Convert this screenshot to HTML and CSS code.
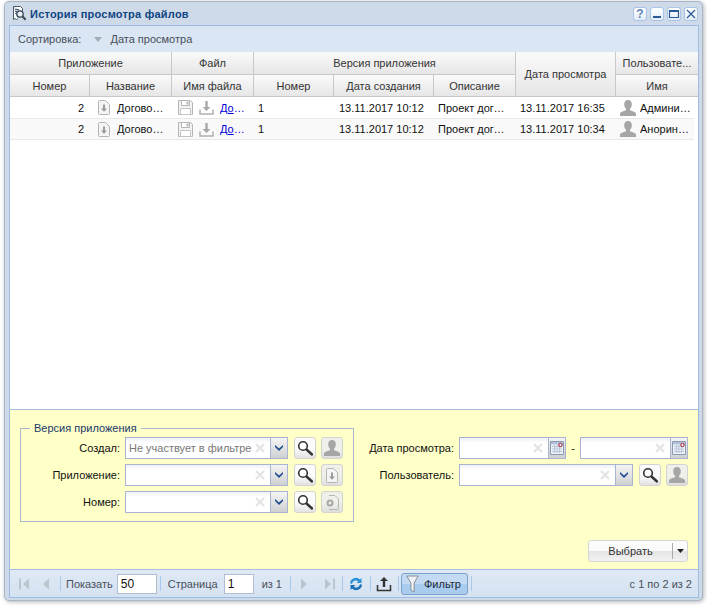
FILE: index.html
```html
<!DOCTYPE html>
<html lang="ru">
<head>
<meta charset="utf-8">
<title>История просмотра файлов</title>
<link rel="stylesheet" href="styles.css">
</head>
<body>
<svg class="defs" width="0" height="0">
  <symbol id="i-doc" viewBox="0 0 12 15"><path d="M1.500.5h6l4 4v9a1 1 0 0 1-1 1h-9a1 1 0 0 1-1-1v-12a1 1 0 0 1 1-1z" fill="#f4f4f4" stroke="#b5b5b5"/><path d="M5 4.500h2v4h2l-3 3.200-3-3.200h2z" fill="#9a9a9a"/></symbol>
  <symbol id="i-save" viewBox="0 0 15 15"><path d="M.5.5h12l2 2v12H.5z" fill="#f2f2f2" stroke="#b5b5b5"/><path d="M3.500.5h8v5h-8z" fill="#fff" stroke="#b5b5b5"/><path d="M8.500 1.500h2v3h-2z" fill="#b5b5b5"/><path d="M2.500 8.500h10v6h-10z" fill="#fff" stroke="#c5c5c5"/></symbol>
  <symbol id="i-down" viewBox="0 0 15 15"><path d="M6.300 1h2.400v6h2.800L7.500 11 3.500 7h2.800z" fill="#a8a8a8"/><path d="M1 9.500v4.500h13V9.500" fill="none" stroke="#b0b0b0" stroke-width="1.500"/></symbol>
  <symbol id="i-user" viewBox="0 0 16 16"><path d="M8 0c2.600 0 3.800 1.800 3.800 4.200 0 2-.8 3.600-1.800 4.500v1.500c2 .8 5.500 1.400 6 3.300V16H0v-2.500c.5-1.900 4-2.500 6-3.300V8.700C5 7.800 4.200 6.200 4.200 4.200 4.200 1.800 5.400 0 8 0z" fill="#a6a6a6"/></symbol>
  <symbol id="i-search" viewBox="0 0 16 16"><circle cx="6" cy="6" r="4.300" fill="#fff" stroke="#333" stroke-width="1.600"/><path d="M9.500 9.500l5.500 5" stroke="#333" stroke-width="2.400" stroke-linecap="round"/></symbol>
  <symbol id="i-gear" viewBox="0 0 14 15"><path d="M4 .5h6l3.500 3.500v9.500a1 1 0 0 1-1 1H4" fill="none" stroke="#b5b5b5"/><circle cx="5" cy="8" r="3.500" fill="#a8a8a8"/><circle cx="5" cy="8" r="1.400" fill="#f0f0e8"/></symbol>
  <symbol id="i-cal" viewBox="0 0 14 14"><path d="M.5.500h13v13H.5z" fill="#eef2f8" stroke="#8a99b2"/><path d="M1 1h12v2.500H1z" fill="#b4c3da"/><path d="M2 5.500h10M2 8h10M2 10.500h10M4.500 4v8M7 4v8M9.500 4v8" stroke="#b9c6da"/><circle cx="10.500" cy="4" r="1.700" fill="#fff" stroke="#a0142a"/></symbol>
  <symbol id="i-x" viewBox="0 0 10 10"><path d="M1 1l8 8M9 1l-8 8" stroke="#e4e4e4" stroke-width="2.200"/></symbol>
  <symbol id="i-chev" viewBox="0 0 10 6"><path d="M1 0l4 3.500L9 0v2L5 6 1 2z" fill="#1f4e8f"/></symbol>
</svg>

<main class="window">
  <header class="titlebar">
    <svg class="title-icon" width="16" height="17" viewBox="0 0 16 17"><path d="M2.500 1.500h7l2 2v3M2.500 1.500v13l1.500-1 1.500 1 1.500-1" fill="#fff" stroke="#4d5a68"/><path d="M4 4.500h4M4 6.500h2M4 8.500h2" stroke="#4d5a68"/><circle cx="9" cy="9" r="3.200" fill="#e8eef5" stroke="#3a4652" stroke-width="1.300"/><path d="M11.300 11.300l3.400 3.400" stroke="#3a4652" stroke-width="2"/></svg>
    <h1 class="title">История просмотра файлов</h1>
    <div class="win-tools">
      <span class="win-btn win-help">?</span>
      <span class="win-btn"><svg width="12" height="12" viewBox="0 0 12 12"><path d="M2 8h8v2H2z" fill="#2a5a96"/></svg></span>
      <span class="win-btn"><svg width="12" height="12" viewBox="0 0 12 12"><path d="M1.500 2.500h9v7h-9z" fill="none" stroke="#2a5a96" stroke-width="1.200"/><path d="M1 2h10v2H1z" fill="#2a5a96"/></svg></span>
      <span class="win-btn"><svg width="12" height="12" viewBox="0 0 12 12"><path d="M2 2l8 8M10 2l-8 8" stroke="#2a5a96" stroke-width="1.200"/></svg></span>
    </div>
  </header>

  <div class="content">
    <div class="sortbar">
      <span>Сортировка:</span>
      <svg class="sort-arrow" width="8" height="5" viewBox="0 0 8 5"><path d="M0 0h8L4 5z" fill="#a4abb4"/></svg>
      <span>Дата просмотра</span>
    </div>

    <div class="grid-head">
      <div class="hc g1">Приложение</div>
      <div class="hc g2">Файл</div>
      <div class="hc g3">Версия приложения</div>
      <div class="hc g4">Дата просмотра</div>
      <div class="hc g5">Пользовате...</div>
      <div class="hc">Номер</div>
      <div class="hc">Название</div>
      <div class="hc">Имя файла</div>
      <div class="hc">Номер</div>
      <div class="hc">Дата создания</div>
      <div class="hc">Описание</div>
      <div class="hc">Имя</div>
    </div>

    <div class="grid-body">
      <div class="row row-first">
        <div class="c c-num">2</div>
        <div class="c c-icon"><svg class="ic-doc" width="12" height="15"><use href="#i-doc"/></svg><span class="ell">Договор поставки</span></div>
        <div class="c c-file"><svg width="15" height="15"><use href="#i-save"/></svg><svg width="15" height="15"><use href="#i-down"/></svg><a class="ell" href="#">Договор поставки</a></div>
        <div class="c c-ver">1</div>
        <div class="c c-created">13.11.2017 10:12</div>
        <div class="c c-desc"><span class="ell">Проект договора</span></div>
        <div class="c c-date">13.11.2017 16:35</div>
        <div class="c c-usr"><svg width="16" height="16"><use href="#i-user"/></svg><span class="ell">Администратор</span></div>
      </div>
      <div class="row alt">
        <div class="c c-num">2</div>
        <div class="c c-icon"><svg class="ic-doc" width="12" height="15"><use href="#i-doc"/></svg><span class="ell">Договор поставки</span></div>
        <div class="c c-file"><svg width="15" height="15"><use href="#i-save"/></svg><svg width="15" height="15"><use href="#i-down"/></svg><a class="ell" href="#">Договор поставки</a></div>
        <div class="c c-ver">1</div>
        <div class="c c-created">13.11.2017 10:12</div>
        <div class="c c-desc"><span class="ell">Проект договора</span></div>
        <div class="c c-date">13.11.2017 10:34</div>
        <div class="c c-usr"><svg width="16" height="16"><use href="#i-user"/></svg><span class="ell">Анорин Иван Петрович</span></div>
      </div>
    </div>

    <section class="filter">
      <div class="filter-cols">
        <fieldset class="group">
          <legend>Версия приложения</legend>
          <div class="f-row">
            <label class="lbl lbl-l">Создал:</label>
            <div class="inp inp-combo"><span class="ph">Не участвует в фильтре</span><svg class="x" width="10" height="10"><use href="#i-x"/></svg><span class="drop"><svg width="10" height="6"><use href="#i-chev"/></svg></span></div>
            <span class="ibtn"><svg width="16" height="16"><use href="#i-search"/></svg></span>
            <span class="ibtn dis"><svg width="16" height="16"><use href="#i-user"/></svg></span>
          </div>
          <div class="f-row">
            <label class="lbl lbl-l">Приложение:</label>
            <div class="inp inp-combo"><svg class="x" width="10" height="10"><use href="#i-x"/></svg><span class="drop"><svg width="10" height="6"><use href="#i-chev"/></svg></span></div>
            <span class="ibtn"><svg width="16" height="16"><use href="#i-search"/></svg></span>
            <span class="ibtn dis"><svg width="12" height="15"><use href="#i-doc"/></svg></span>
          </div>
          <div class="f-row">
            <label class="lbl lbl-l">Номер:</label>
            <div class="inp inp-combo"><svg class="x" width="10" height="10"><use href="#i-x"/></svg><span class="drop"><svg width="10" height="6"><use href="#i-chev"/></svg></span></div>
            <span class="ibtn"><svg width="16" height="16"><use href="#i-search"/></svg></span>
            <span class="ibtn dis"><svg width="14" height="15"><use href="#i-gear"/></svg></span>
          </div>
        </fieldset>

        <div class="right-fields">
          <div class="f-row">
            <label class="lbl lbl-r">Дата просмотра:</label>
            <div class="inp inp-date"><svg class="x" width="10" height="10"><use href="#i-x"/></svg><span class="drop"><svg width="14" height="14"><use href="#i-cal"/></svg></span></div>
            <span class="dash">-</span>
            <div class="inp inp-date inp-date2"><svg class="x" width="10" height="10"><use href="#i-x"/></svg><span class="drop"><svg width="14" height="14"><use href="#i-cal"/></svg></span></div>
          </div>
          <div class="f-row">
            <label class="lbl lbl-r">Пользователь:</label>
            <div class="inp inp-user"><svg class="x" width="10" height="10"><use href="#i-x"/></svg><span class="drop"><svg width="10" height="6"><use href="#i-chev"/></svg></span></div>
            <span class="ibtn"><svg width="16" height="16"><use href="#i-search"/></svg></span>
            <span class="ibtn dis"><svg width="16" height="16"><use href="#i-user"/></svg></span>
          </div>
        </div>
      </div>
      <div class="select-row">
        <div class="split"><span class="split-main">Выбрать</span><span class="split-arrow"><svg width="7" height="4" viewBox="0 0 7 4"><path d="M0 0h7L3.500 4z" fill="#222"/></svg></span></div>
      </div>
    </section>

    <footer class="pager">
      <span class="pbtn"><svg width="14" height="14" viewBox="0 0 14 14"><path d="M2 1.500h2v11H2z" fill="#bcc4cd"/><path d="M12 1.500v11L6 7z" fill="#bcc4cd"/></svg></span>
      <span class="pbtn"><svg width="14" height="14" viewBox="0 0 14 14"><path d="M10 1.500v11L4 7z" fill="#bcc4cd"/></svg></span>
      <i class="sep"></i>
      <span class="ptext pt-show">Показать</span>
      <span class="pinp pinp-size">50</span>
      <i class="sep"></i>
      <span class="ptext pt-page">Страница</span>
      <span class="pinp pinp-page">1</span>
      <span class="ptext pt-of">из 1</span>
      <i class="sep sep-of"></i>
      <span class="pbtn pb-next"><svg width="14" height="14" viewBox="0 0 14 14"><path d="M4 1.500v11L10 7z" fill="#bcc4cd"/></svg></span>
      <span class="pbtn pb-last"><svg width="14" height="14" viewBox="0 0 14 14"><path d="M2 1.500v11L8 7z" fill="#bcc4cd"/><path d="M10 1.500h2v11h-2z" fill="#bcc4cd"/></svg></span>
      <i class="sep sep-last"></i>
      <span class="pbtn pb-tool"><svg width="16" height="16" viewBox="0 0 16 16"><path d="M2 7a6 6 0 0 1 10-3.500l1.500-1.500v5h-5l1.800-1.800A4 4 0 0 0 4 8z" fill="#2d8fd5"/><path d="M14 9a6 6 0 0 1-10 3.500L2.500 14V9h5l-1.800 1.800A4 4 0 0 0 12 8z" fill="#1b6fb5"/></svg></span>
      <i class="sep"></i>
      <span class="pbtn pb-tool"><svg width="16" height="16" viewBox="0 0 16 16"><path d="M6.800 11V5H4l4-4 4 4H9.200v6z" fill="#333"/><path d="M1.500 9v5.500h13V9" fill="none" stroke="#333" stroke-width="1.500"/></svg></span>
      <i class="sep"></i>
      <span class="filter-btn"><svg width="13" height="18" viewBox="0 0 16 18" preserveAspectRatio="none"><path d="M1 1h14L10 8v9l-4-2V8z" fill="#eef2f6" stroke="#7d848c"/></svg><span>Фильтр</span></span>
      <i class="sep"></i>
      <span class="ptext ptotal">с 1 по 2 из 2</span>
    </footer>
  </div>
</main>
</body>
</html>
```

FILE: styles.css
```css
* { box-sizing: border-box; }
html, body { margin: 0; padding: 0; background: #fff; }
body {
  width: 708px;
  height: 607px;
  overflow: hidden;
  font-family: "Liberation Sans", Arial, sans-serif;
  font-size: 11px;
  color: #222;
}
.defs { position: absolute; }
.window {
  margin: 1px 0 0 4px;
  width: 699px;
  height: 600px;
  padding: 0 3px 2px 4px;
  background: #cedae8;
  border: 1px solid #a7b6c9;
  border-radius: 5px;
  box-shadow: 1px 1px 4px rgba(0,0,0,.3);
  display: flex;
  flex-direction: column;
}
.titlebar { height: 23px; display: flex; align-items: center; flex: none; }
.title-icon { margin-left: 2px; flex: none; }
.title {
  margin: 0 0 0 3px;
  font-size: 11px;
  letter-spacing: .22px;
  font-weight: bold;
  color: #0f4583;
}
.win-tools { margin-left: auto; display: flex; gap: 3px; padding-right: 1px; }
.win-btn {
  width: 14px;
  height: 14px;
  border: 1px solid #a8c4e8;
  border-radius: 3px;
  background: linear-gradient(#fff, #e3ecf7);
  display: flex;
  align-items: center;
  justify-content: center;
  overflow: hidden;
}
.win-help { color: #5f86b8; font-weight: bold; font-size: 12px; line-height: 12px; }
.content {
  flex: 1;
  min-height: 0;
  border: 1px solid #9dbce4;
  background: #fff;
  display: flex;
  flex-direction: column;
}
.sortbar {
  height: 26px;
  flex: none;
  background: #dbe6f4;
  display: flex;
  align-items: center;
  padding-left: 8px;
  color: #474f59;
}
.sort-arrow { margin: 0 8px 0 13px; }
.grid-head {
  flex: none;
  display: grid;
  grid-template-columns: 80px 82px 82px 80px 100px 82px 100px 82px;
  grid-template-rows: 23px 22px;
  height: 45px;
}
.hc {
  display: flex;
  align-items: center;
  justify-content: center;
  white-space: nowrap;
  color: #333;
  background: linear-gradient(#fafafa, #e6e6e6);
  border-right: 1px solid #c8c8c8;
  border-bottom: 1px solid #c8c8c8;
  min-width: 0;
}
.g1 { grid-column: span 2; }
.g2 { grid-column: span 1; }
.g3 { grid-column: span 3; }
.g4 { grid-row: span 2; grid-column: 7; }
.g5 { border-right: 0; }
.hc:last-child { border-right: 0; }
.grid-body { flex: 1; min-height: 0; background: #fff; }
.row {
  width: 684px;
  height: 21px;
  display: grid;
  grid-template-columns: 80px 82px 82px 80px 100px 82px 100px 78px;
  border-bottom: 1px solid #e8e8e8;
  align-items: center;
}
.row-first { height: 22px; }
.row.alt { background: #f9f9f9; }
.c {
  min-width: 0;
  white-space: nowrap;
  display: flex;
  align-items: center;
  color: #111;
}
.c-num { justify-content: flex-end; padding-right: 6px; }
.c-icon { padding: 0 6px 0 8px; }
.ic-doc { margin-right: 7px; flex: none; }
.c-file { padding: 0 6px 0 6px; gap: 6px; }
.c-file svg { flex: none; }
.c-ver { padding-left: 4px; }
.c-created { padding-left: 5px; }
.c-desc { padding: 0 7px 0 4px; }
.c-date { padding-left: 4px; }
.c-usr { padding: 0 3px 0 4px; gap: 4px; }
.c-usr svg { flex: none; }
.ell { overflow: hidden; text-overflow: ellipsis; min-width: 0; display: block; }
a.ell { color: #0000d8; text-decoration: underline; }

.filter {
  flex: none;
  height: 161px;
  background: #ffffc8;
  border-top: 1px solid #a9c0e0;
  border-bottom: 1px solid #a9c0e0;
  display: flex;
  flex-direction: column;
  padding: 12px 10px 7px 10px;
}
.filter-cols { display: flex; justify-content: space-between; }
.group {
  margin: 0;
  width: 334px;
  height: 100px;
  padding: 2px 0 0 0;
  border: 1px solid #a9b7d0;
  display: flex;
  flex-direction: column;
  gap: 5px;
}
.group legend {
  margin-left: 9px;
  padding: 0 4px;
  line-height: 13px;
  color: #20386a;
}
.f-row { display: flex; align-items: center; height: 22px; flex: none; }
.lbl { text-align: right; color: #111; white-space: nowrap; flex: none; }
.lbl-l { width: 99px; margin-right: 5px; }
.lbl-r { width: 95px; margin-right: 5px; }
.right-fields { width: 329px; padding-top: 15px; display: flex; flex-direction: column; gap: 5px; }
.inp {
  height: 22px;
  border: 1px solid #a9b5d0;
  background: linear-gradient(#eef1f7, #fff 5px);
  display: flex;
  align-items: center;
  flex: none;
  overflow: hidden;
}
.inp-combo { width: 163px; }
.inp-date { width: 107px; }
.inp-date2 { width: 108px; }
.inp-user { width: 174px; }
.ph { color: #777; padding-left: 3px; white-space: nowrap; }
.x { margin: 0 5px 0 auto; flex: none; }
.drop {
  width: 17px;
  height: 100%;
  flex: none;
  background: linear-gradient(#f4f4f4, #cfd0d2);
  border-left: 1px solid #a9b5d0;
  display: flex;
  align-items: center;
  justify-content: center;
}
.dash { width: 14px; text-align: center; flex: none; }
.ibtn {
  width: 22px;
  height: 22px;
  flex: none;
  margin-left: 5px;
  border: 1px solid #d3d3d3;
  border-radius: 3px;
  background: linear-gradient(#fbfbfb 55%, #e2e2e2);
  display: flex;
  align-items: center;
  justify-content: center;
}
.inp + .ibtn { margin-left: 6px; }
.ibtn.dis { background: linear-gradient(#f0f0ea 55%, #dedede); }
.select-row { margin-top: auto; display: flex; justify-content: flex-end; }
.split {
  width: 100px;
  height: 22px;
  border: 1px solid #d5d5d5;
  border-radius: 3px;
  background: linear-gradient(#fbfbfb 50%, #e4e4e4 50%, #f2f2f2);
  display: flex;
  align-items: center;
}
.split-main { flex: 1; text-align: center; color: #333; }
.split-arrow {
  width: 15px;
  height: 16px;
  border-left: 1px solid #aaa;
  display: flex;
  align-items: center;
  justify-content: center;
}
.pager {
  flex: none;
  height: 27px;
  background: linear-gradient(#dfe9f5, #d5e2f1);
  display: flex;
  align-items: center;
  padding: 0 6px 0 3px;
  color: #48505a;
}
.pbtn {
  width: 22px;
  height: 22px;
  flex: none;
  display: flex;
  align-items: center;
  justify-content: center;
}
.pb-next { margin-left: 2px; }
.pb-last { margin-left: 4px; }
.pb-tool { margin-left: 2px; }
.sep { width: 1px; height: 15px; background: #a7c9ee; flex: none; margin-left: 3px; }
.sep-of { margin-left: 8px; }
.sep-last { margin-left: 1px; }
.ptext { white-space: nowrap; flex: none; }
.pt-show { margin-left: 5px; }
.pt-page { margin-left: 7px; }
.pt-of { margin-left: 8px; }
.pinp {
  height: 20px;
  border: 1px solid #b2bdd0;
  background: #fff;
  color: #111;
  font-size: 12px;
  padding-left: 3px;
  line-height: 18px;
  flex: none;
}
.pinp-size { width: 40px; margin-left: 4px; }
.pinp-page { width: 30px; margin-left: 6px; }
.filter-btn {
  width: 67px;
  height: 22px;
  flex: none;
  margin-left: 2px;
  border: 1px solid #7ba2cc;
  border-radius: 3px;
  background: linear-gradient(#c4daf2 50%, #a9cbee 50%);
  color: #1d2a3a;
  display: flex;
  align-items: center;
  gap: 5px;
  padding-left: 4px;
}
.ptotal { margin-left: auto; }
```
